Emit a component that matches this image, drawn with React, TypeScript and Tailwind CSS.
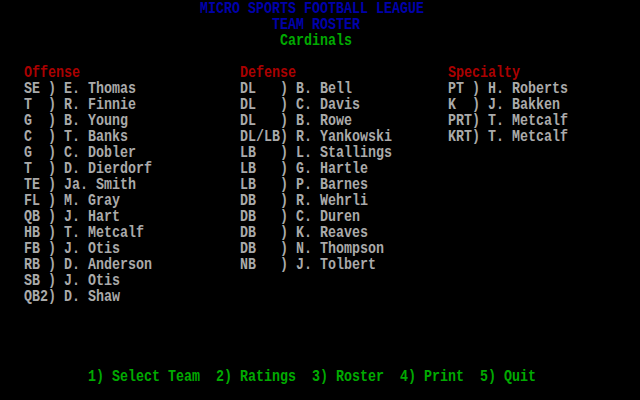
const offense = [
  "SE ) E. Thomas",
  "T  ) R. Finnie",
  "G  ) B. Young",
  "C  ) T. Banks",
  "G  ) C. Dobler",
  "T  ) D. Dierdorf",
  "TE ) Ja. Smith",
  "FL ) M. Gray",
  "QB ) J. Hart",
  "HB ) T. Metcalf",
  "FB ) J. Otis",
  "RB ) D. Anderson",
  "SB ) J. Otis",
  "QB2) D. Shaw",
];

const defense = [
  "DL   ) B. Bell",
  "DL   ) C. Davis",
  "DL   ) B. Rowe",
  "DL/LB) R. Yankowski",
  "LB   ) L. Stallings",
  "LB   ) G. Hartle",
  "LB   ) P. Barnes",
  "DB   ) R. Wehrli",
  "DB   ) C. Duren",
  "DB   ) K. Reaves",
  "DB   ) N. Thompson",
  "NB   ) J. Tolbert",
];

const specialty = [
  "PT ) H. Roberts",
  "K  ) J. Bakken",
  "PRT) T. Metcalf",
  "KRT) T. Metcalf",
];

// one 8x16 text cell row, glyphs stretched to look like the tall DOS font
const Line = ({ text, className = "" }: { text: string; className?: string }) => (
  <div className={`flex h-4 items-center whitespace-pre ${className}`}>
    <span className="block origin-center translate-y-px scale-y-[1.3] leading-[12px]">{text}</span>
  </div>
);

const Column = ({ title, rows, width }: { title: string; rows: string[]; width: string }) => (
  <div className={`flex flex-col ${width}`}>
    <Line text={title} className="text-[#aa0000]" />
    {rows.map((r, i) => (
      <Line key={i} text={r} className="text-[#aaaaaa]" />
    ))}
  </div>
);

export default function App() {
  return (
    <div
      className="flex h-[400px] w-[640px] flex-col overflow-hidden bg-black text-[13.333px] font-bold leading-4"
      style={{ fontFamily: '"Liberation Mono", monospace' }}
    >
      <Line text="MICRO SPORTS FOOTBALL LEAGUE" className="pl-[200px] text-[#0000aa]" />
      <Line text="TEAM ROSTER" className="pl-[272px] text-[#0000aa]" />
      <Line text="Cardinals" className="pl-[280px] text-[#00aa00]" />
      <div className="h-4" />
      <div className="flex h-[304px] pl-[24px]">
        <Column title="Offense" rows={offense} width="w-[216px]" />
        <Column title="Defense" rows={defense} width="w-[208px]" />
        <Column title="Specialty" rows={specialty} width="w-[184px]" />
      </div>
      <Line
        text="1) Select Team  2) Ratings  3) Roster  4) Print  5) Quit"
        className="pl-[88px] text-[#00aa00]"
      />
    </div>
  );
}
